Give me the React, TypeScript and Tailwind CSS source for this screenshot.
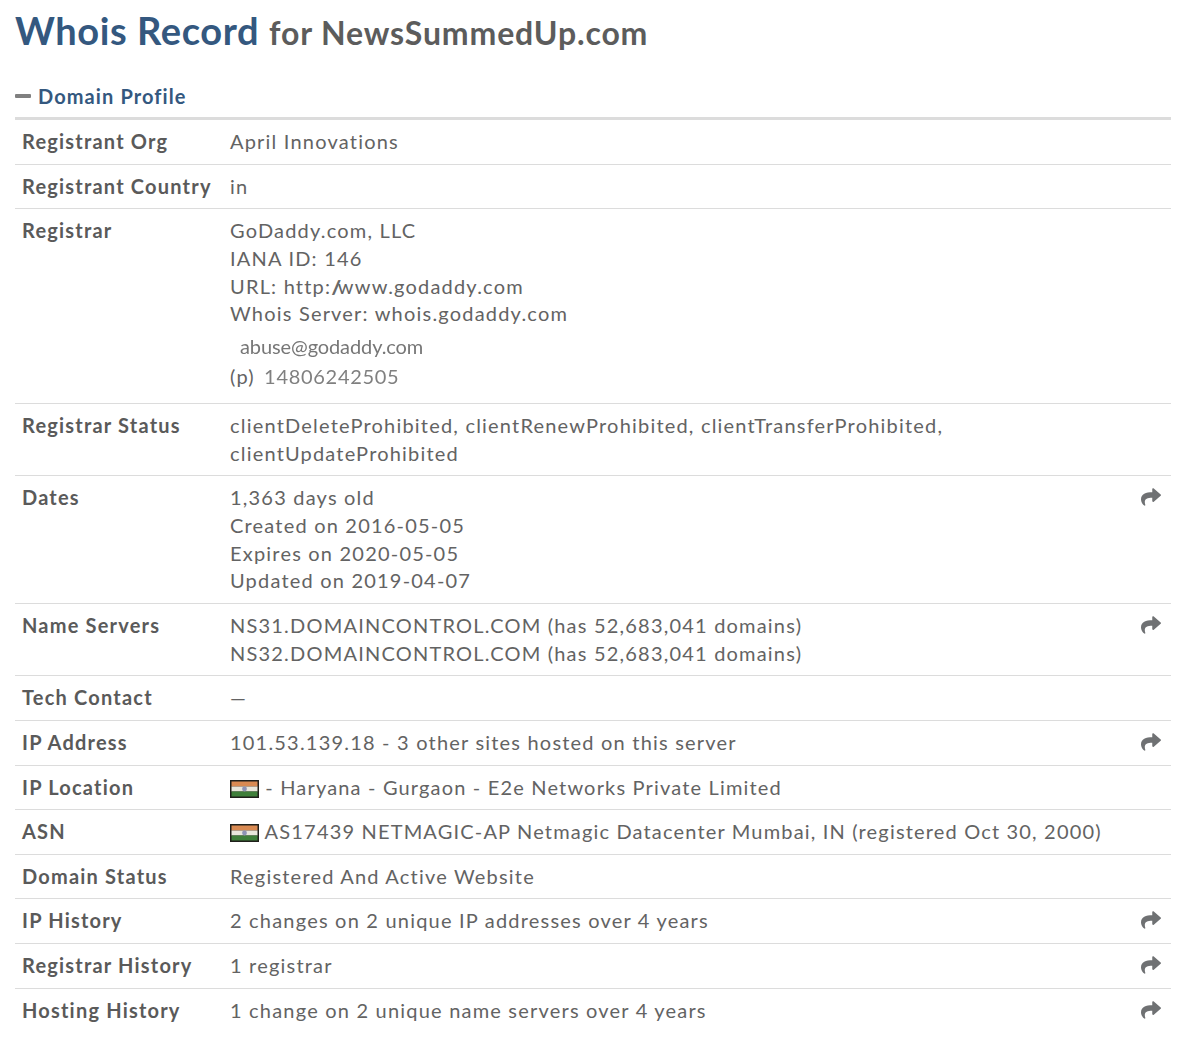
import { FaShare } from "react-icons/fa";

const Flag = () => (
  <svg width="29" height="18" viewBox="0 0 29 18" className="inline-block align-[-3px] blur-[0.5px]">
    <rect width="29" height="18" fill="#1f1f1a" />
    <rect x="1.5" y="1.5" width="26" height="5" fill="#d98a52" />
    <rect x="1.5" y="6.5" width="26" height="5" fill="#e9e7dc" />
    <rect x="1.5" y="11.5" width="26" height="5" fill="#3f7f3a" />
    <circle cx="14.5" cy="9" r="2.4" fill="#8e93b5" />
  </svg>
);

const Row = ({
  label,
  share,
  children,
}: {
  label: string;
  share?: boolean;
  children: React.ReactNode;
}) => (
  <div className="flex border-b border-[#dcdcdc] last:border-b-0 py-[8px] pl-[7px] pr-[10px] leading-[27.65px]">
    <div className="w-[208px] shrink-0 font-bold text-[#5a5a5a]">{label}</div>
    <div className="flex-1 text-[#636363]">{children}</div>
    {share && (
      <div className="w-[20px] shrink-0 pt-[3px] text-[#6f7173]">
        <FaShare size={20} />
      </div>
    )}
  </div>
);

export default function App() {
  return (
    <div className="w-[1200px] h-[1040px] overflow-hidden bg-white px-[15px] font-['Lato',sans-serif] text-[20px] tracking-[1.2px]">
      <h1 className="pt-[7px] h-[62px] leading-[46px] font-bold tracking-[0.6px] text-[38px] text-[#34587f]">
        Whois Record{" "}
        <span className="text-[32px] text-[#5c5c5c] tracking-[0.85px]">for NewsSummedUp.com</span>
      </h1>
      <div className="mt-[20px] h-[38px] flex items-center gap-[7px] border-b-[3px] border-[#dcdcdc] pb-[7px] w-[1156px]">
        <span className="w-[16px] h-[4px] rounded-[1px] bg-[#808080]" />
        <span className="font-bold text-[#34587f] leading-[27px] tracking-[1.1px]">Domain Profile</span>
      </div>
      <div className="w-[1156px]">
        <Row label="Registrant Org">April Innovations</Row>
        <Row label="Registrant Country">in</Row>
        <Row label="Registrar">
          <div>GoDaddy.com, LLC</div>
          <div>IANA ID: 146</div>
          <div>
            URL: http:<span className="tracking-[-3.5px]">//</span>www.godaddy.com
          </div>
          <div>Whois Server: whois.godaddy.com</div>
          <div className="h-[32px] pl-[10px] pt-[5px] tracking-[-0.1px] text-[#777] blur-[0.5px]">
            abuse@godaddy.com
          </div>
          <div className="h-[35px] pt-[3px]">
            (p) <span className="ml-[3px] tracking-[0.7px] text-[#808080] blur-[0.5px]">14806242505</span>
          </div>
        </Row>
        <Row label="Registrar Status">
          <div>clientDeleteProhibited, clientRenewProhibited, clientTransferProhibited,</div>
          <div>clientUpdateProhibited</div>
        </Row>
        <Row label="Dates" share>
          <div>1,363 days old</div>
          <div>Created on 2016-05-05</div>
          <div>Expires on 2020-05-05</div>
          <div>Updated on 2019-04-07</div>
        </Row>
        <Row label="Name Servers" share>
          <div>NS31.DOMAINCONTROL.COM (has 52,683,041 domains)</div>
          <div>NS32.DOMAINCONTROL.COM (has 52,683,041 domains)</div>
        </Row>
        <Row label="Tech Contact">—</Row>
        <Row label="IP Address" share>
          101.53.139.18 - 3 other sites hosted on this server
        </Row>
        <Row label="IP Location">
          <div className="tracking-[1.17px]">
            <Flag /> - Haryana - Gurgaon - E2e Networks Private Limited
          </div>
        </Row>
        <Row label="ASN">
          <div className="tracking-[1.17px]">
            <Flag /> AS17439 NETMAGIC-AP Netmagic Datacenter Mumbai, IN (registered Oct 30, 2000)
          </div>
        </Row>
        <Row label="Domain Status">Registered And Active Website</Row>
        <Row label="IP History" share>
          2 changes on 2 unique IP addresses over 4 years
        </Row>
        <Row label="Registrar History" share>
          1 registrar
        </Row>
        <Row label="Hosting History" share>
          1 change on 2 unique name servers over 4 years
        </Row>
      </div>
    </div>
  );
}
